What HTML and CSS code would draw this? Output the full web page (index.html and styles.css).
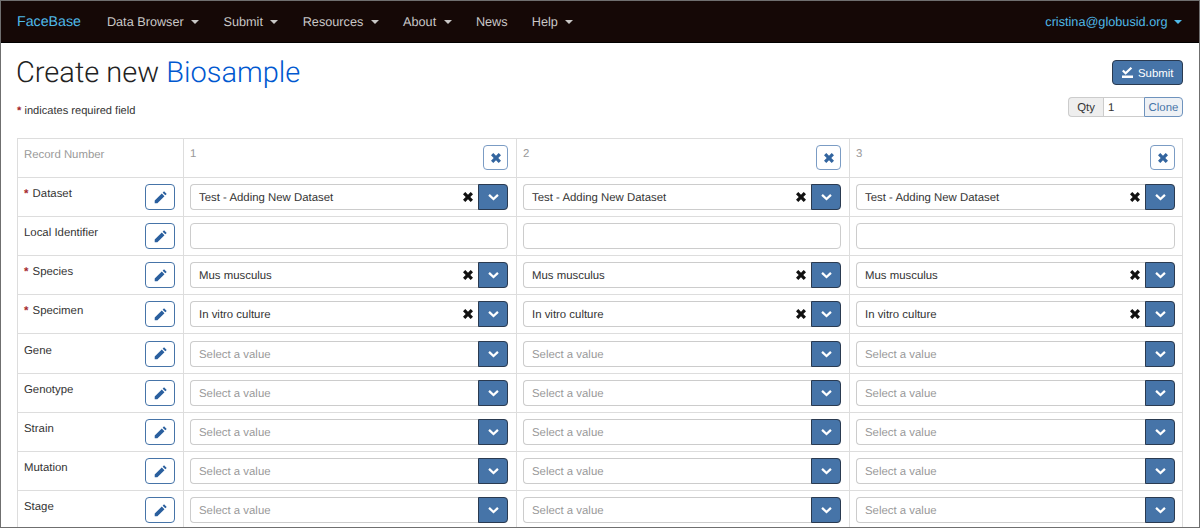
FILE: index.html
```html
<!DOCTYPE html>
<html>
<head>
    <title>Create new Biosample</title>
    <meta charset="utf-8">
    <link rel="stylesheet" href="styles.css">
</head>
<body>
<svg class="defs" width="0" height="0">
    <symbol id="pencil" viewBox="0 0 14 14"><path d="M10.3 1.2l2.5 2.5-1.3 1.3L9 2.500zM8.200 3.300l2.500 2.500-6.600 6.600H1.600V9.900z"/></symbol>
    <symbol id="cross" viewBox="0 0 12 12"><path d="M3.300 1L6 3.700 8.700 1 11 3.300 8.300 6 11 8.700 8.700 11 6 8.300 3.300 11 1 8.700 3.700 6 1 3.300z"/></symbol>
    <symbol id="chevron" viewBox="0 0 12 8"><path d="M2 .8L6 4.600 10 .8l1.700 1.700L6 7.900.3 2.500z"/></symbol>
    <symbol id="check" viewBox="0 0 11 11"><path d="M0 4.200l1.600-1.500 2 2L8.600 0l1.600 1.500-6.600 6.300zM0 8.600h11V11H0z"/></symbol>
</svg>
<div class="frame">
    <nav class="navbar">
        <a class="brand">FaceBase</a>
        <a class="nav-item">Data Browser <i class="caret"></i></a>
        <a class="nav-item">Submit <i class="caret"></i></a>
        <a class="nav-item">Resources <i class="caret"></i></a>
        <a class="nav-item">About <i class="caret"></i></a>
        <a class="nav-item">News</a>
        <a class="nav-item">Help <i class="caret"></i></a>
        <a class="nav-user">cristina@globusid.org <i class="caret"></i></a>
    </nav>
    <div class="page">
        <div class="head">
            <div>
                <h1>Create new <span class="table-name">Biosample</span></h1>
                <p class="hint"><span class="star">*</span> indicates required field</p>
            </div>
            <div class="actions">
                <button class="btn-submit"><svg class="icon-check"><use href="#check"/></svg>Submit</button>
                <div class="clone">
                    <span class="qty-label">Qty</span>
                    <span class="qty-input">1</span>
                    <span class="clone-btn">Clone</span>
                </div>
            </div>
        </div>
        <table class="entry">
            <tr class="row-head">
                <th class="muted">Record Number</th>
                <td><div class="rec"><span>1</span><button class="btn-remove"><svg class="icon-cross"><use href="#cross"/></svg></button></div></td>
                <td><div class="rec"><span>2</span><button class="btn-remove"><svg class="icon-cross"><use href="#cross"/></svg></button></div></td>
                <td><div class="rec"><span>3</span><button class="btn-remove"><svg class="icon-cross"><use href="#cross"/></svg></button></div></td>
            </tr>
            <tr>
                <th><div class="label"><span><span class="star">*</span> Dataset</span><button class="btn-edit"><svg class="icon-pencil"><use href="#pencil"/></svg></button></div></th>
                <td><div class="select"><span class="value">Test - Adding New Dataset</span><svg class="icon-clear"><use href="#cross"/></svg><span class="drop"><svg class="icon-chevron"><use href="#chevron"/></svg></span></div></td>
                <td><div class="select"><span class="value">Test - Adding New Dataset</span><svg class="icon-clear"><use href="#cross"/></svg><span class="drop"><svg class="icon-chevron"><use href="#chevron"/></svg></span></div></td>
                <td><div class="select"><span class="value">Test - Adding New Dataset</span><svg class="icon-clear"><use href="#cross"/></svg><span class="drop"><svg class="icon-chevron"><use href="#chevron"/></svg></span></div></td>
            </tr>
            <tr>
                <th><div class="label"><span>Local Identifier</span><button class="btn-edit"><svg class="icon-pencil"><use href="#pencil"/></svg></button></div></th>
                <td><div class="text-input"></div></td>
                <td><div class="text-input"></div></td>
                <td><div class="text-input"></div></td>
            </tr>
            <tr>
                <th><div class="label"><span><span class="star">*</span> Species</span><button class="btn-edit"><svg class="icon-pencil"><use href="#pencil"/></svg></button></div></th>
                <td><div class="select"><span class="value">Mus musculus</span><svg class="icon-clear"><use href="#cross"/></svg><span class="drop"><svg class="icon-chevron"><use href="#chevron"/></svg></span></div></td>
                <td><div class="select"><span class="value">Mus musculus</span><svg class="icon-clear"><use href="#cross"/></svg><span class="drop"><svg class="icon-chevron"><use href="#chevron"/></svg></span></div></td>
                <td><div class="select"><span class="value">Mus musculus</span><svg class="icon-clear"><use href="#cross"/></svg><span class="drop"><svg class="icon-chevron"><use href="#chevron"/></svg></span></div></td>
            </tr>
            <tr>
                <th><div class="label"><span><span class="star">*</span> Specimen</span><button class="btn-edit"><svg class="icon-pencil"><use href="#pencil"/></svg></button></div></th>
                <td><div class="select"><span class="value">In vitro culture</span><svg class="icon-clear"><use href="#cross"/></svg><span class="drop"><svg class="icon-chevron"><use href="#chevron"/></svg></span></div></td>
                <td><div class="select"><span class="value">In vitro culture</span><svg class="icon-clear"><use href="#cross"/></svg><span class="drop"><svg class="icon-chevron"><use href="#chevron"/></svg></span></div></td>
                <td><div class="select"><span class="value">In vitro culture</span><svg class="icon-clear"><use href="#cross"/></svg><span class="drop"><svg class="icon-chevron"><use href="#chevron"/></svg></span></div></td>
            </tr>
            <tr class="row-tall">
                <th><div class="label"><span>Gene</span><button class="btn-edit"><svg class="icon-pencil"><use href="#pencil"/></svg></button></div></th>
                <td><div class="select"><span class="placeholder">Select a value</span><span class="drop"><svg class="icon-chevron"><use href="#chevron"/></svg></span></div></td>
                <td><div class="select"><span class="placeholder">Select a value</span><span class="drop"><svg class="icon-chevron"><use href="#chevron"/></svg></span></div></td>
                <td><div class="select"><span class="placeholder">Select a value</span><span class="drop"><svg class="icon-chevron"><use href="#chevron"/></svg></span></div></td>
            </tr>
            <tr>
                <th><div class="label"><span>Genotype</span><button class="btn-edit"><svg class="icon-pencil"><use href="#pencil"/></svg></button></div></th>
                <td><div class="select"><span class="placeholder">Select a value</span><span class="drop"><svg class="icon-chevron"><use href="#chevron"/></svg></span></div></td>
                <td><div class="select"><span class="placeholder">Select a value</span><span class="drop"><svg class="icon-chevron"><use href="#chevron"/></svg></span></div></td>
                <td><div class="select"><span class="placeholder">Select a value</span><span class="drop"><svg class="icon-chevron"><use href="#chevron"/></svg></span></div></td>
            </tr>
            <tr>
                <th><div class="label"><span>Strain</span><button class="btn-edit"><svg class="icon-pencil"><use href="#pencil"/></svg></button></div></th>
                <td><div class="select"><span class="placeholder">Select a value</span><span class="drop"><svg class="icon-chevron"><use href="#chevron"/></svg></span></div></td>
                <td><div class="select"><span class="placeholder">Select a value</span><span class="drop"><svg class="icon-chevron"><use href="#chevron"/></svg></span></div></td>
                <td><div class="select"><span class="placeholder">Select a value</span><span class="drop"><svg class="icon-chevron"><use href="#chevron"/></svg></span></div></td>
            </tr>
            <tr>
                <th><div class="label"><span>Mutation</span><button class="btn-edit"><svg class="icon-pencil"><use href="#pencil"/></svg></button></div></th>
                <td><div class="select"><span class="placeholder">Select a value</span><span class="drop"><svg class="icon-chevron"><use href="#chevron"/></svg></span></div></td>
                <td><div class="select"><span class="placeholder">Select a value</span><span class="drop"><svg class="icon-chevron"><use href="#chevron"/></svg></span></div></td>
                <td><div class="select"><span class="placeholder">Select a value</span><span class="drop"><svg class="icon-chevron"><use href="#chevron"/></svg></span></div></td>
            </tr>
            <tr>
                <th><div class="label"><span>Stage</span><button class="btn-edit"><svg class="icon-pencil"><use href="#pencil"/></svg></button></div></th>
                <td><div class="select"><span class="placeholder">Select a value</span><span class="drop"><svg class="icon-chevron"><use href="#chevron"/></svg></span></div></td>
                <td><div class="select"><span class="placeholder">Select a value</span><span class="drop"><svg class="icon-chevron"><use href="#chevron"/></svg></span></div></td>
                <td><div class="select"><span class="placeholder">Select a value</span><span class="drop"><svg class="icon-chevron"><use href="#chevron"/></svg></span></div></td>
            </tr>
        </table>
    </div>
</div>
</body>
</html>
```

FILE: styles.css
```css
html, body {
    margin: 0;
    height: 100%;
    overflow: hidden;
}
body {
    font-family: "Liberation Sans", Arial, sans-serif;
    font-size: 11.4px;
    color: #333;
    background-color: white;
    text-rendering: geometricPrecision;
}
.defs {
    position: absolute;
}
.frame {
    height: 528px;
    box-sizing: border-box;
    border: 1px solid #6f6f6f;
    overflow: hidden;
}

/* navbar */
.navbar {
    display: flex;
    align-items: center;
    height: 41px;
    padding: 0 17px 0 16px;
    background-color: #150806;
    border-bottom: 1px solid #000;
    font-size: 12.7px;
    color: #c9c7c6;
}
.brand {
    color: #4fb9e8;
    font-size: 14.2px;
    margin-right: 26px;
}
.nav-item {
    margin-right: 24.2px;
    white-space: nowrap;
}
.nav-user {
    margin-left: auto;
    color: #4fb9e8;
}
.caret {
    display: inline-block;
    width: 0;
    height: 0;
    margin-left: 4px;
    vertical-align: 2px;
    border-top: 4px solid currentColor;
    border-left: 4px solid transparent;
    border-right: 4px solid transparent;
}
.nav-user .caret {
    margin-left: 3px;
}

/* title area */
.page {
    padding: 0 16px;
}
.head {
    display: flex;
    justify-content: space-between;
    height: 95px;
}
h1 {
    margin: 13px 0 0 -1px;
    font-family: Roboto, "Liberation Sans", sans-serif;
    font-weight: 300;
    font-size: 29px;
    line-height: 34px;
    color: #222;
}
.table-name {
    color: #0058d0;
}
.hint {
    margin: 14px 0 0;
    font-size: 11.1px;
    line-height: 14px;
}
.star {
    color: #a3262b;
    font-weight: 700;
}
.label .star {
    margin-right: 1px;
}
.actions {
    display: flex;
    flex-direction: column;
    align-items: flex-end;
}
.btn-submit {
    display: flex;
    align-items: center;
    gap: 5px;
    width: 71px;
    height: 25px;
    margin-top: 17px;
    padding: 0 0 0 9px;
    font: 11.4px "Liberation Sans", Arial, sans-serif;
    color: #fff;
    background-color: #4674a8;
    border: 1px solid #2a3a50;
    border-radius: 4px;
}
.icon-check {
    width: 11px;
    height: 11px;
    fill: #fff;
}
.clone {
    display: flex;
    height: 20px;
    margin-top: 12px;
    font-size: 11.4px;
    line-height: 20px;
}
.qty-label {
    width: 34px;
    text-align: center;
    background-color: #eee;
    border: 1px solid #ccc;
    border-right: 0;
    border-radius: 4px 0 0 4px;
}
.qty-input {
    width: 36px;
    padding-left: 4px;
    border-top: 1px solid #ccc;
    border-bottom: 1px solid #ccc;
    border-left: 1px solid #ccc;
}
.clone-btn {
    width: 37px;
    text-align: center;
    color: #4674a8;
    background-color: #eef1f5;
    border: 1px solid #6f93bd;
    border-radius: 0 4px 4px 0;
}

/* entry table */
.entry {
    width: 1166px;
    table-layout: fixed;
    border-collapse: collapse;
    border-spacing: 0;
}
.entry th, .entry td {
    height: 39px;
    padding: 0 8px 0 6px;
    box-sizing: border-box;
    border: 1px solid #ddd;
    font-weight: 400;
    text-align: left;
    vertical-align: middle;
}
.entry td:last-child {
    padding-right: 7px;
}
.entry .row-tall th, .entry .row-tall td {
    height: 40px;
}
.entry th {
    width: 166px;
}
.row-head th, .row-head td {
    vertical-align: top;
    color: #999;
}
.row-head th {
    padding-top: 10px;
}
.rec {
    display: flex;
    justify-content: space-between;
    padding-top: 6px;
}
.rec span {
    margin-top: 3px;
}
.btn-remove {
    width: 25px;
    height: 25px;
    padding: 0;
    background: #fff;
    border: 1px solid #7b9cc4;
    border-radius: 4px;
}
.icon-cross {
    display: block;
    width: 12px;
    height: 12px;
    margin: auto;
    fill: #33659f;
}
.label {
    display: flex;
    justify-content: space-between;
}
.label > span {
    margin-top: 4px;
}
.btn-edit {
    width: 30px;
    height: 26px;
    padding: 0;
    background: #fff;
    border: 1px solid #4674a8;
    border-radius: 4px;
}
.icon-pencil {
    display: block;
    width: 15px;
    height: 15px;
    margin: auto;
    fill: #2a5f9e;
}
.select, .text-input {
    display: flex;
    align-items: center;
    height: 26px;
    box-sizing: border-box;
    background: #fff;
    border: 1px solid #ccc;
    border-radius: 4px;
}
.select {
    padding-left: 8px;
    border-right: 0;
}
.value, .placeholder {
    flex: 1;
    padding-top: 2px;
}
.placeholder {
    color: #999;
}
.icon-clear {
    width: 12px;
    height: 12px;
    margin-right: 4px;
    fill: #111;
}
.drop {
    display: flex;
    align-items: center;
    justify-content: center;
    width: 30px;
    height: 26px;
    box-sizing: border-box;
    background-color: #4674a8;
    border: 1px solid #2a3a50;
    border-radius: 0 4px 4px 0;
}
.icon-chevron {
    width: 11px;
    height: 8px;
    fill: #fff;
}
```
